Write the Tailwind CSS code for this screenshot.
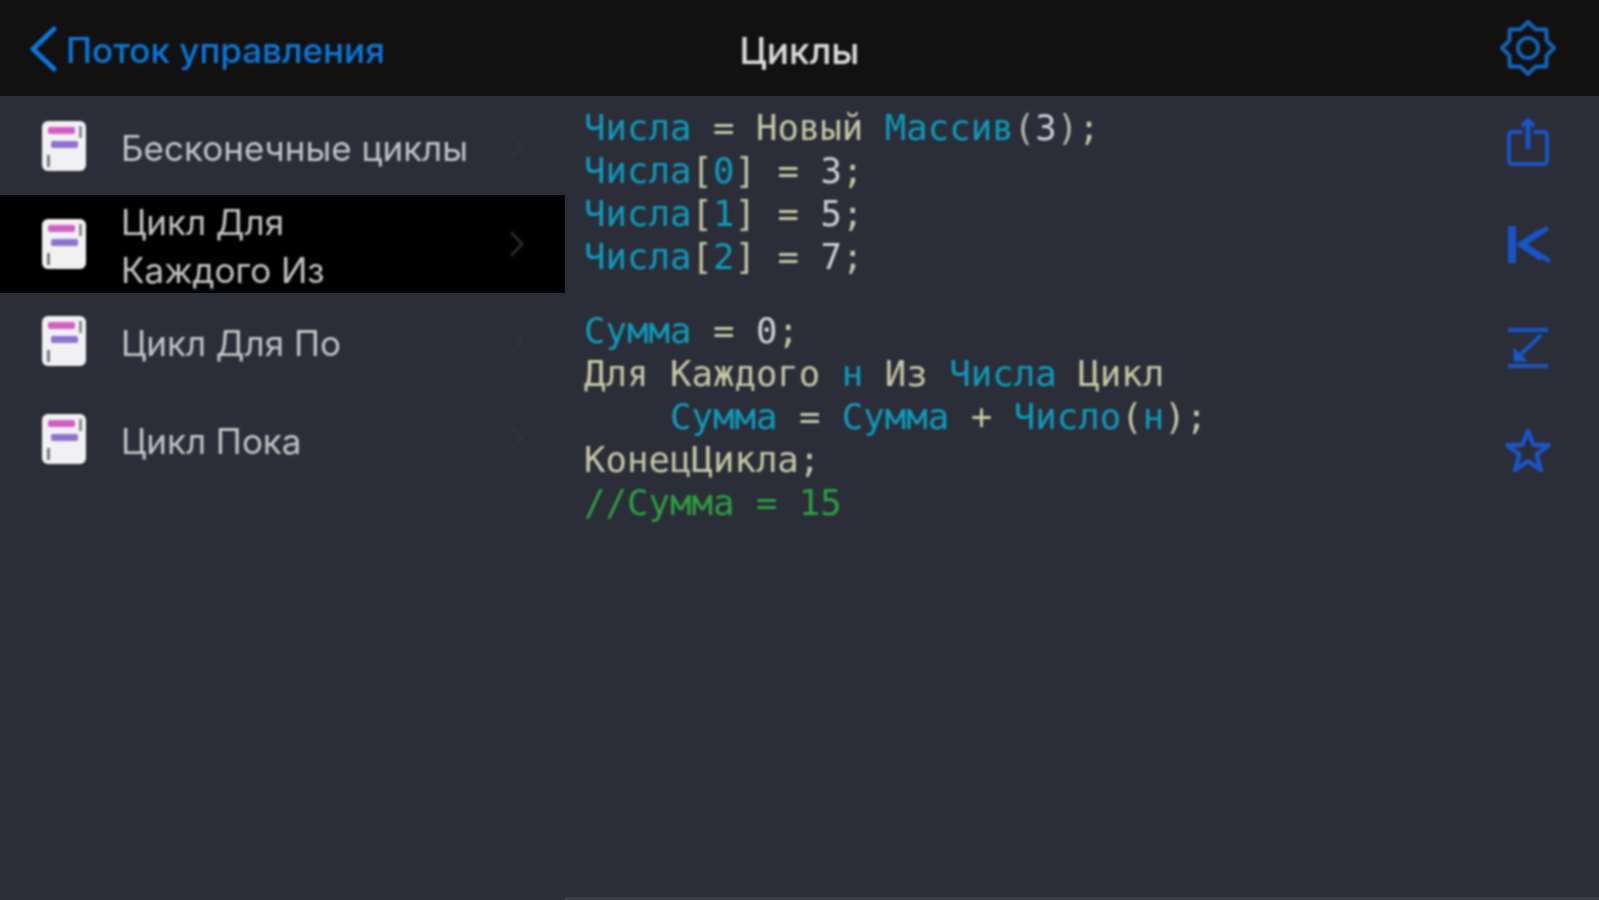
<!DOCTYPE html>
<html lang="ru">

<head>
  <meta charset="UTF-8" />
  <title>Циклы</title>
  <script src="https://cdn.jsdelivr.net/npm/@tailwindcss/browser@4"></script>
</head>

<body class="h-[900px] w-[1599px] overflow-hidden bg-[#2b2d38] font-['Inter','Liberation_Sans',sans-serif]">
  <!-- header -->
  <header class="relative flex h-[96px] items-center justify-between bg-[#111111] pl-[29px] pr-[41px] pt-[5px]">
    <div class="flex items-center gap-[7px] text-[#0a78dc] blur-[1.1px]">
      <svg width="30" height="48" viewBox="0 0 30 48" fill="none" stroke="currentColor" stroke-width="5" stroke-linecap="round" stroke-linejoin="round" class="-mt-[4px]">
        <path d="M25 4 4 24l21 20" />
      </svg>
      <span class="text-[35px] font-medium">Поток управления</span>
    </div>
    <span class="absolute left-0 right-0 text-center text-[37px] font-medium text-[#dcdcdc] blur-[1.1px]">Циклы</span>
    <svg width="60" height="60" viewBox="0 0 60 60" fill="none" stroke="#1464b8" stroke-width="4" stroke-linejoin="round" class="-mt-[5px] blur-[1.1px]">
      <circle cx="30" cy="30" r="10" />
      <path d="M30 4 37.650 11.500 48.400 11.600 48.500 22.400 56 30 48.500 37.600 48.400 48.400 37.650 48.500 30 56 22.350 48.500 11.600 48.400 11.500 37.600 4 30 11.500 22.400 11.600 11.600 22.350 11.500z" />
    </svg>
  </header>

  <main class="flex h-[804px]">
    <!-- sidebar -->
    <aside class="w-[565px] shrink-0 pt-[1px] text-[35px] leading-[48px] text-[#c4c4c6]">
      <div class="flex h-[97.5px] items-center pl-[42px] pr-[40px]">
        <svg width="44" height="50" viewBox="0 0 44 50" class="mr-[35px] shrink-0 blur-[1.1px]">
          <rect width="44" height="50" rx="6" fill="#f1f0f2" />
          <rect x="6" y="6" width="27" height="7" rx="2" fill="#d45fc4" />
          <rect x="9" y="20" width="27" height="7" rx="2" fill="#8f72cf" />
          <rect x="37" y="5" width="3" height="12" fill="#8b8b8f" />
          <rect x="5" y="34" width="3" height="12" fill="#77777b" />
        </svg>
        <span class="flex-1 pt-[4px] blur-[1.1px]">Бесконечные циклы</span>
        <svg width="16" height="28" viewBox="0 0 16 28" fill="none" stroke="#30323d" stroke-width="3" stroke-linecap="round" stroke-linejoin="round" class="blur-[1.1px]">
          <path d="m3 3 10 11L3 25" />
        </svg>
      </div>
      <div class="flex h-[98px] items-center bg-black pl-[42px] pr-[40px]">
        <svg width="44" height="50" viewBox="0 0 44 50" class="mr-[35px] shrink-0 blur-[1.1px]">
          <rect width="44" height="50" rx="6" fill="#f1f0f2" />
          <rect x="6" y="6" width="27" height="7" rx="2" fill="#d45fc4" />
          <rect x="9" y="20" width="27" height="7" rx="2" fill="#8f72cf" />
          <rect x="37" y="5" width="3" height="12" fill="#8b8b8f" />
          <rect x="5" y="34" width="3" height="12" fill="#77777b" />
        </svg>
        <span class="flex-1 pt-[4px] blur-[1.1px]">Цикл Для<br />Каждого Из</span>
        <svg width="16" height="28" viewBox="0 0 16 28" fill="none" stroke="#2a2a2c" stroke-width="3" stroke-linecap="round" stroke-linejoin="round" class="blur-[1.1px]">
          <path d="m3 3 10 11L3 25" />
        </svg>
      </div>
      <div class="flex h-[97.5px] items-center pl-[42px] pr-[40px]">
        <svg width="44" height="50" viewBox="0 0 44 50" class="mr-[35px] shrink-0 blur-[1.1px]">
          <rect width="44" height="50" rx="6" fill="#f1f0f2" />
          <rect x="6" y="6" width="27" height="7" rx="2" fill="#d45fc4" />
          <rect x="9" y="20" width="27" height="7" rx="2" fill="#8f72cf" />
          <rect x="37" y="5" width="3" height="12" fill="#8b8b8f" />
          <rect x="5" y="34" width="3" height="12" fill="#77777b" />
        </svg>
        <span class="flex-1 pt-[4px] blur-[1.1px]">Цикл Для По</span>
        <svg width="16" height="28" viewBox="0 0 16 28" fill="none" stroke="#30323d" stroke-width="3" stroke-linecap="round" stroke-linejoin="round" class="blur-[1.1px]">
          <path d="m3 3 10 11L3 25" />
        </svg>
      </div>
      <div class="flex h-[97.5px] items-center pl-[42px] pr-[40px]">
        <svg width="44" height="50" viewBox="0 0 44 50" class="mr-[35px] shrink-0 blur-[1.1px]">
          <rect width="44" height="50" rx="6" fill="#f1f0f2" />
          <rect x="6" y="6" width="27" height="7" rx="2" fill="#d45fc4" />
          <rect x="9" y="20" width="27" height="7" rx="2" fill="#8f72cf" />
          <rect x="37" y="5" width="3" height="12" fill="#8b8b8f" />
          <rect x="5" y="34" width="3" height="12" fill="#77777b" />
        </svg>
        <span class="flex-1 pt-[4px] blur-[1.1px]">Цикл Пока</span>
        <svg width="16" height="28" viewBox="0 0 16 28" fill="none" stroke="#30323d" stroke-width="3" stroke-linecap="round" stroke-linejoin="round" class="blur-[1.1px]">
          <path d="m3 3 10 11L3 25" />
        </svg>
      </div>
    </aside>

    <!-- code + toolbar -->
    <section class="relative flex flex-1">
      <div class="flex-1 pl-[19px] pt-[10px] font-['DejaVu_Sans_Mono','Liberation_Mono',monospace] text-[35.7px] leading-[43px] text-[#c8c8a8] blur-[1px]">
        <div><span class="text-[#0f9cbc]">Числа</span> = Новый <span class="text-[#0f9cbc]">Массив</span><span class="text-[#b8b8b0]">(<span class="text-[#d0d0d4]">3</span>)</span>;</div>
        <div><span class="text-[#0f9cbc]">Числа</span>[<span class="text-[#0f9cbc]">0</span>] = <span class="text-[#d0d0d4]">3</span>;</div>
        <div><span class="text-[#0f9cbc]">Числа</span>[<span class="text-[#0f9cbc]">1</span>] = <span class="text-[#d0d0d4]">5</span>;</div>
        <div><span class="text-[#0f9cbc]">Числа</span>[<span class="text-[#0f9cbc]">2</span>] = <span class="text-[#d0d0d4]">7</span>;</div>
        <div class="mt-[31px]"><span class="text-[#0f9cbc]">Сумма</span> = <span class="text-[#d0d0d4]">0</span>;</div>
        <div>Для Каждого <span class="text-[#0f9cbc]">н</span> Из <span class="text-[#0f9cbc]">Числа</span> Цикл</div>
        <div class="whitespace-pre">    <span class="text-[#0f9cbc]">Сумма</span> = <span class="text-[#0f9cbc]">Сумма</span> + <span class="text-[#0f9cbc]">Число</span>(<span class="text-[#0f9cbc]">н</span>);</div>
        <div>КонецЦикла;</div>
        <div class="text-[#2f9e44]">//Сумма = 15</div>
      </div>

      <nav class="-mt-[6px] flex w-[142px] shrink-0 flex-col items-center text-[#1a55c8] blur-[0.9px]">
        <div class="flex h-[103px] w-full items-center justify-center">
          <svg width="42" height="50" viewBox="0 0 42 50" fill="none" stroke="currentColor" stroke-width="4" stroke-linecap="round" stroke-linejoin="round">
            <path d="M14 15H5a3 3 0 0 0-3 3v26a3 3 0 0 0 3 3h32a3 3 0 0 0 3-3V18a3 3 0 0 0-3-3h-9" />
            <path d="M21 30V4" stroke-width="5" />
            <path d="m16 8 5-5 5 5" />
          </svg>
        </div>
        <div class="flex h-[103px] w-full items-center justify-center pl-[3px]">
          <svg width="44" height="37" viewBox="0 0 44 37" fill="none" stroke="currentColor" stroke-linecap="round" stroke-linejoin="round">
            <path d="M4 0v37" stroke-width="8" stroke-linecap="butt" />
            <path d="M38 3 15 18.500 40 34" stroke-width="5" />
            <path d="M31 5 10 18.500 32 33" stroke-width="3" />
          </svg>
        </div>
        <div class="flex h-[103px] w-full items-center justify-center">
          <svg width="42" height="42" viewBox="0 0 42 42" fill="none" stroke="currentColor" stroke-width="4" stroke-linejoin="round">
            <path d="M1 3h40M1 39h40" />
            <path d="M33 9 10 31" stroke-linecap="round" />
            <path d="M7 21v13h13z" fill="currentColor" stroke-width="1" />
          </svg>
        </div>
        <div class="flex h-[103px] w-full items-center justify-center">
          <svg width="48" height="48" viewBox="0 0 48 48" fill="none" stroke="currentColor" stroke-width="4.500" stroke-linejoin="round">
            <path d="m24 4 5.600 14H45L32.600 27.500 37 43 24 34l-13 9 4.400-15.500L3 18h15.400z" />
          </svg>
        </div>
      </nav>
      <div class="absolute inset-x-0 bottom-0 h-[3px] bg-[#3a3c46]"></div>
    </section>
  </main>
</body>

</html>
